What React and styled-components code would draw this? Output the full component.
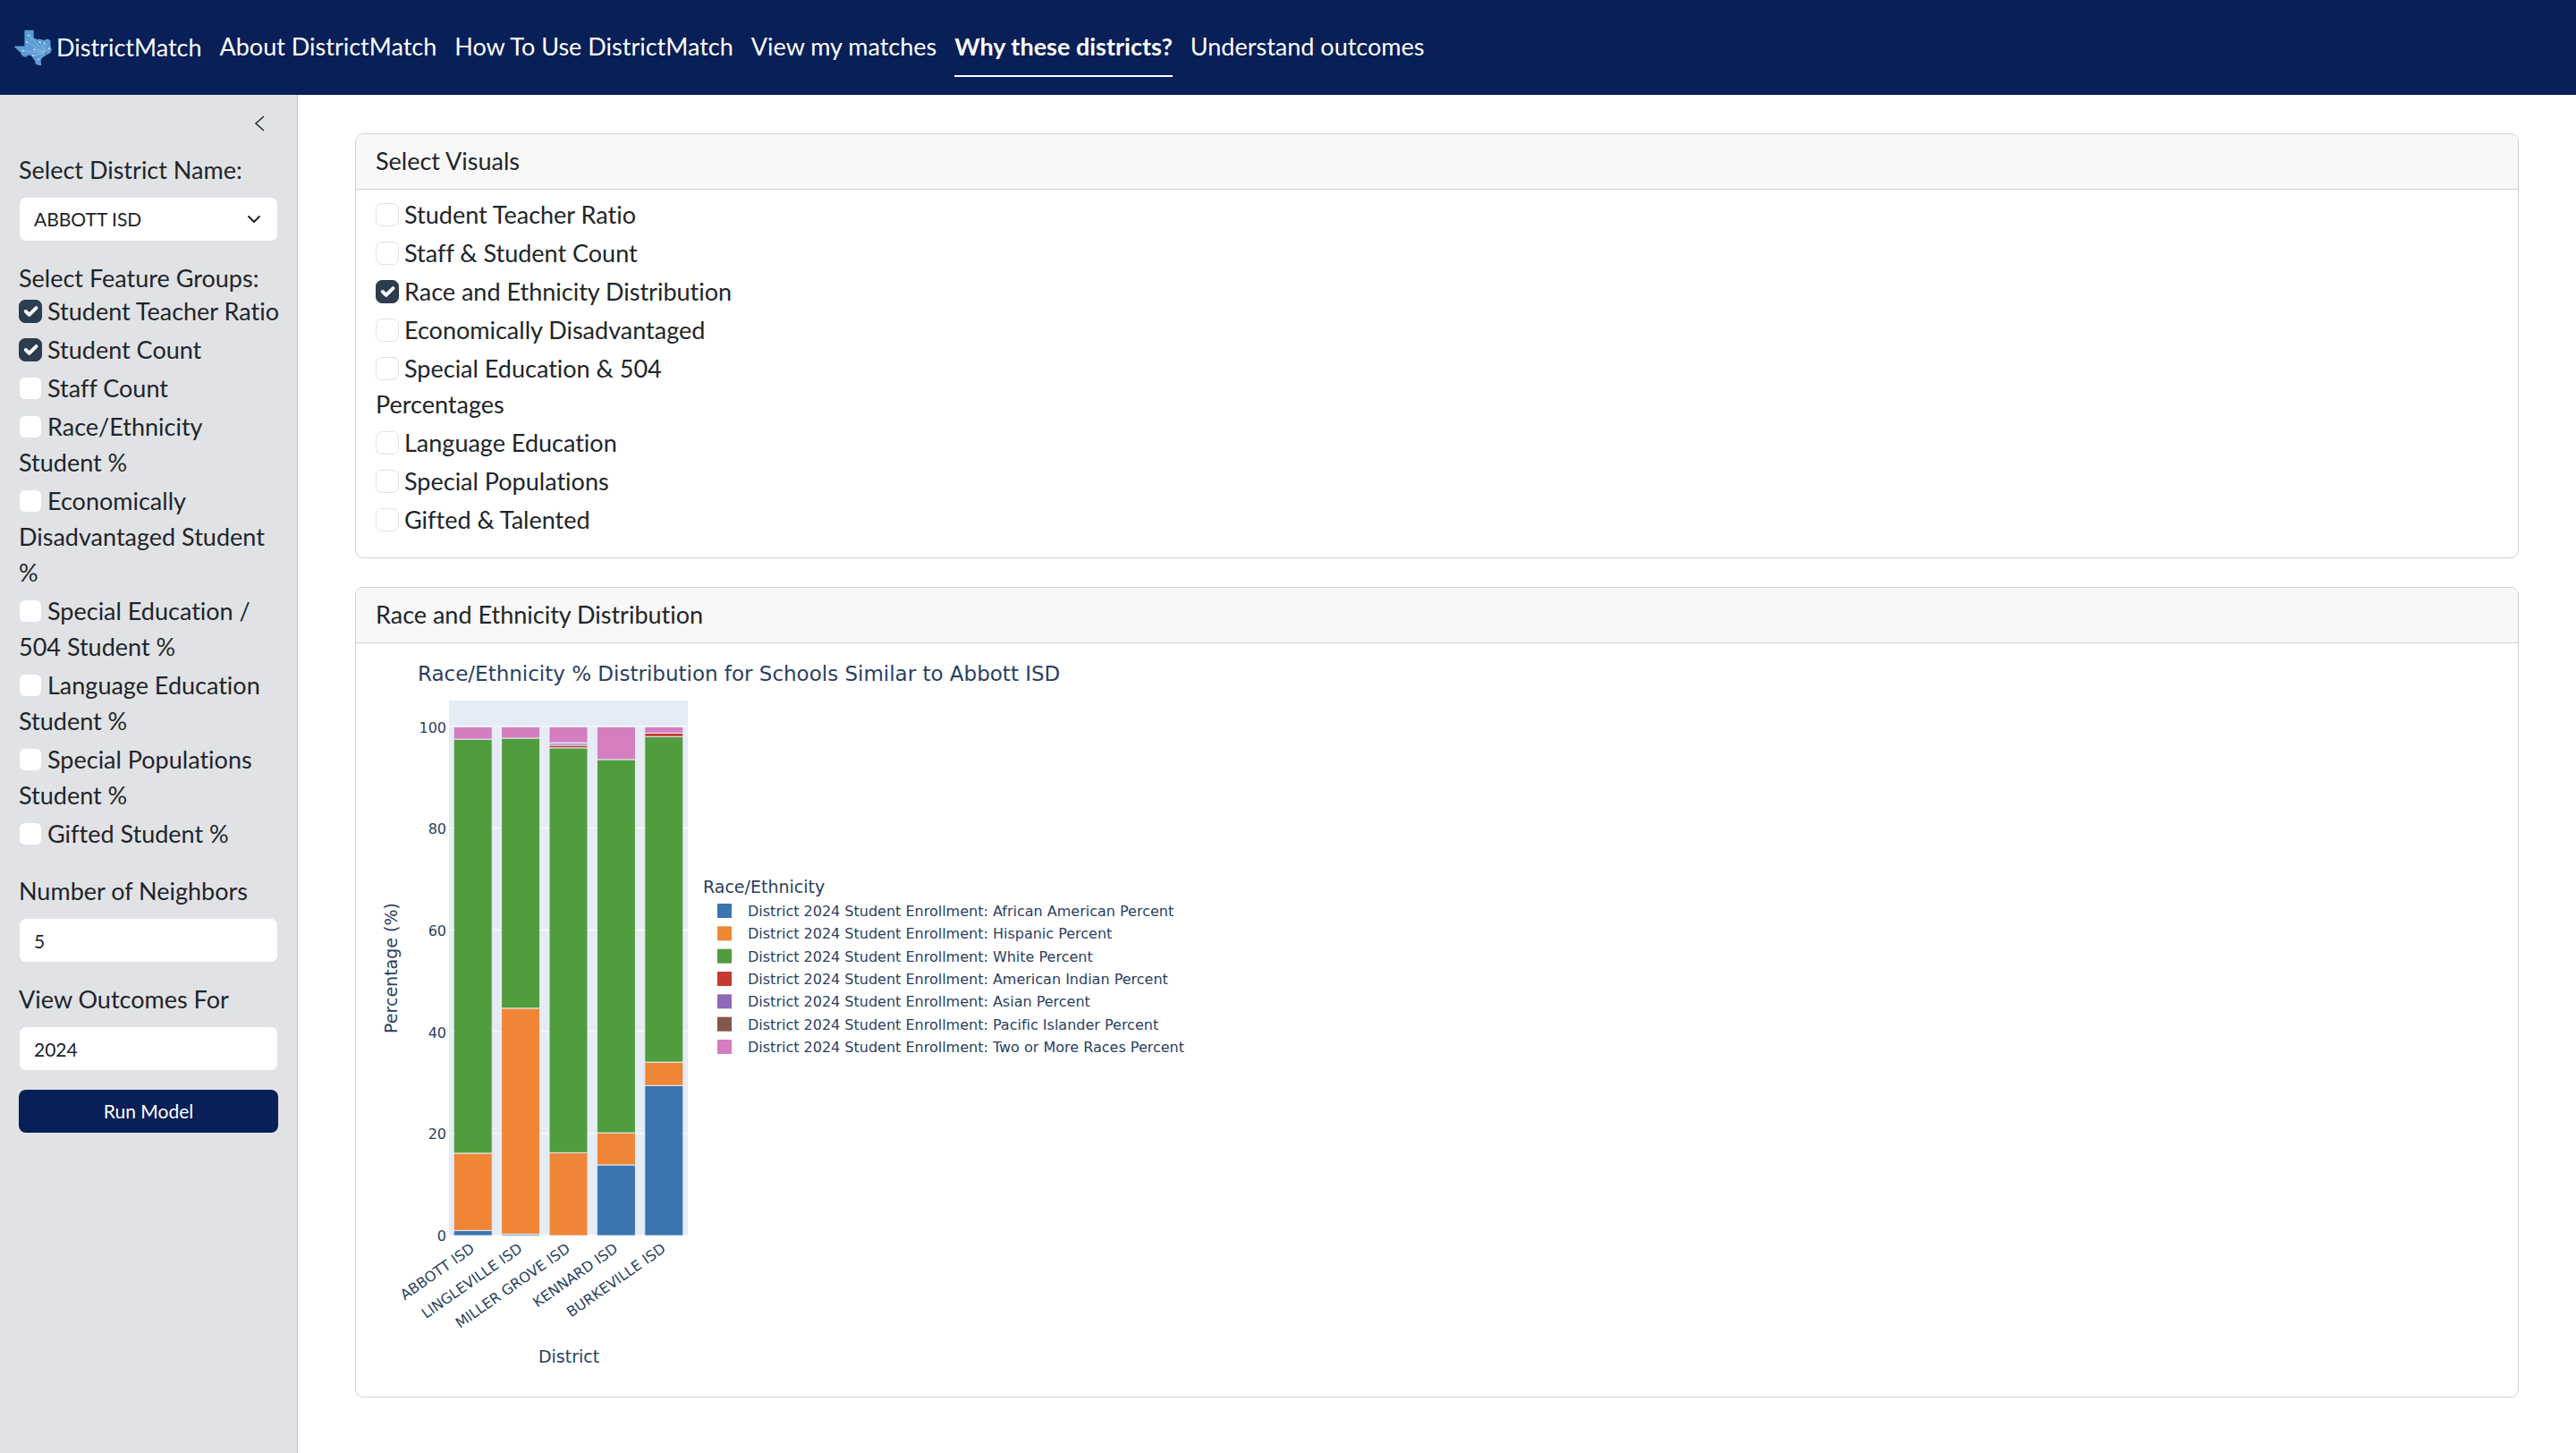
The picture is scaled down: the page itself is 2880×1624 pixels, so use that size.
import React, { useState } from "react";
import styled, { createGlobalStyle } from "styled-components";

const NAVY = "#081f57";
const INK = "#212529";

const GlobalStyle = createGlobalStyle`
  *, *::before, *::after { box-sizing: border-box; }
  html, body { margin: 0; background: #ffffff; }
  body {
    color: ${INK};
    font: 27px/40px Lato, "Liberation Sans", sans-serif;
    font-variant-ligatures: none;
  }
`;

const Page = styled.div`
  display: flex;
  flex-direction: column;
  min-height: 100vh;
`;

const Navbar = styled.nav`
  display: flex;
  align-items: center;
  gap: 20px;
  height: 106px;
  padding: 0 16px;
  background: ${NAVY};
`;

const Brand = styled.a`
  display: flex;
  align-items: center;
  gap: 5px;
  color: #ffffff;
  text-decoration: none;
`;

const NavLink = styled.a`
  padding: 12px 0;
  border-bottom: 2px solid ${(p) => (p.$active ? "#ffffff" : "transparent")};
  color: #ffffff;
  font-weight: ${(p) => (p.$active ? 700 : 400)};
  text-decoration: none;
`;

const Body = styled.div`
  display: flex;
  flex: 1;
`;

const Sidebar = styled.aside`
  display: flex;
  flex-direction: column;
  flex: none;
  width: 333px;
  padding: 14px 21px;
  border-right: 1px solid #b9babf;
  background: #e1e2e6;
`;

const CollapseButton = styled.button`
  align-self: flex-end;
  display: flex;
  margin-bottom: 14px;
  padding: 8px 10px;
  border: 0;
  background: none;
  color: ${INK};
`;

const FieldLabel = styled.label`
  display: block;
  margin-bottom: 10px;
`;

const Field = styled.div`
  margin-bottom: 21px;
`;

const controlStyle = `
  display: block;
  width: 100%;
  height: 50px;
  padding: 0 16px;
  border: 1px solid #e1e2e6;
  border-radius: 8px;
  background-color: #ffffff;
  color: ${INK};
  font: 21px/32px Lato, "Liberation Sans", sans-serif;
  appearance: none;
`;

const TextInput = styled.input`
  ${controlStyle}
`;

const SelectWrap = styled.div`
  position: relative;
  svg {
    position: absolute;
    right: 19px;
    top: 17px;
    pointer-events: none;
  }
`;

const Select = styled.select`
  ${controlStyle}
`;

const RunButton = styled.button`
  height: 48px;
  border: 0;
  border-radius: 8px;
  background: ${NAVY};
  color: #ffffff;
  font: 21px/32px Lato, "Liberation Sans", sans-serif;
`;

const Group = styled.fieldset`
  min-width: 0;
  max-width: 400px;
  margin: 0 -4px 0 0;
  padding: 0;
  border: 0;
`;

const Legend = styled.legend`
  padding: 2px 0 0;
  line-height: 35px;
`;

const Option = styled.label`
  display: block;
  margin-bottom: 3px;
`;

const Checkbox = styled.input`
  appearance: none;
  width: 26px;
  height: 26px;
  margin: 7px 6px 0 0;
  vertical-align: top;
  border: 1px solid #dee2e6;
  border-radius: 7px;
  background: #ffffff center / 26px no-repeat;
  &:checked {
    border-color: #2d3c4f;
    background-color: #2d3c4f;
    background-image: url("data:image/svg+xml,%3csvg xmlns='http://www.w3.org/2000/svg' viewBox='0 0 20 20'%3e%3cpath fill='none' stroke='%23fff' stroke-linecap='round' stroke-linejoin='round' stroke-width='3' d='m6 10 3 3 6-6'/%3e%3c/svg%3e");
  }
`;

const Main = styled.main`
  display: flex;
  flex: 1;
  flex-direction: column;
  gap: 32px;
  min-width: 0;
  padding: 43px 64px;
`;

const Card = styled.section`
  border: 1px solid #cfd0d1;
  border-radius: 9px;
  background: #ffffff;
  overflow: hidden;
`;

const CardHeader = styled.h2`
  margin: 0;
  padding: 10px 22px 11px;
  border-bottom: 1px solid #cfd0d1;
  background: #f8f8f8;
  font-size: 27px;
  font-weight: 400;
  line-height: 40px;
`;

const CardBody = styled.div`
  padding: ${(p) => (p.$flush ? "0" : "8px 22px 19px")};
`;

const ChartSvg = styled.svg`
  display: block;
  font-family: "DejaVu Sans", sans-serif;
  fill: #2a3f5f;
`;

const FEATURES = [
  ["Student Teacher Ratio", true],
  ["Student Count", true],
  ["Staff Count", false],
  ["Race/Ethnicity Student %", false],
  ["Economically Disadvantaged Student %", false],
  ["Special Education / 504 Student %", false],
  ["Language Education Student %", false],
  ["Special Populations Student %", false],
  ["Gifted Student %", false],
];

const VISUALS = [
  ["Student Teacher Ratio", false],
  ["Staff & Student Count", false],
  ["Race and Ethnicity Distribution", true],
  ["Economically Disadvantaged", false],
  ["Special Education & 504 Percentages", false],
  ["Language Education", false],
  ["Special Populations", false],
  ["Gifted & Talented", false],
];

const SERIES = [
  ["African American", "#3a75af"],
  ["Hispanic", "#ef8636"],
  ["White", "#519d3e"],
  ["American Indian", "#c53a32"],
  ["Asian", "#8d69b8"],
  ["Pacific Islander", "#84584e"],
  ["Two or More Races", "#d57dbe"],
];

const DISTRICTS = [
  ["ABBOTT ISD", [1.0, 15.2, 81.4, 0, 0, 0, 2.4]],
  ["LINGLEVILLE ISD", [0.3, 44.4, 53.1, 0, 0, 0, 2.2]],
  ["MILLER GROVE ISD", [0, 16.3, 79.6, 0.5, 0.4, 0.1, 3.1]],
  ["KENNARD ISD", [13.9, 6.3, 73.4, 0, 0, 0, 6.4]],
  ["BURKEVILLE ISD", [29.5, 4.6, 64.0, 0.7, 0, 0, 1.2]],
];

function CheckList({ name, items }) {
  return items.map(([text, on]) => (
    <Option key={text}>
      <Checkbox type="checkbox" name={name} defaultChecked={on} />
      {text}
    </Option>
  ));
}

function TexasLogo() {
  const hub = [117, 98];
  const ends = [[60, 38], [54, 60], [41, 90], [80, 86], [98, 60], [113, 65], [129, 82], [75, 106], [93, 119]];
  return (
    <svg width="42" height="41" viewBox="12 18 126 124" aria-hidden="true">
      <path
        fill="#5b9bd5"
        d="M46 20H77V46L88 51L98 50L110 54L125 50L134 56V72L138 86L134 97L120 104L106 113L101 122L103 139L97 140L84 135L80 122L69 107L58 105L50 112L38 107L31 94L12 77V74H46Z"
      />
      {ends.map(([x, y]) => (
        <g key={`${x}-${y}`}>
          <path d={`M${x} ${y}L${hub[0]} ${hub[1]}`} stroke="#9cc3e8" strokeWidth="2" />
          <circle cx={x} cy={y} r="3" fill="#cfe2f5" />
        </g>
      ))}
      <circle cx={hub[0]} cy={hub[1]} r="3" fill="#3c5f94" />
    </svg>
  );
}

function Chart() {
  const left = 104;
  const top = 64;
  const width = 267;
  const zero = 662;
  const unit = 5.685;
  const slot = width / DISTRICTS.length;
  const yOf = (v) => zero - v * unit;
  return (
    <ChartSvg width="1000" height="842" role="img" aria-label="Race and ethnicity distribution chart">
      <text x="69" y="42" fontSize="23">Race/Ethnicity % Distribution for Schools Similar to Abbott ISD</text>
      <rect x={left} y={top} width={width} height={zero - top} fill="#e5ecf6" />
      {[0, 20, 40, 60, 80, 100].map((v) => (
        <g key={v}>
          <rect x={left} y={yOf(v) - 1} width={width} height="1" fill="#ffffff" />
          <text x="101" y={yOf(v) + 6} fontSize="16" textAnchor="end">{v}</text>
        </g>
      ))}
      {DISTRICTS.map(([name, values], i) => {
        let sum = 0;
        const cx = left + slot * (i + 0.5);
        return (
          <g key={name}>
            {values.map((v, s) => {
              const y = yOf(sum + v);
              sum += v;
              return v > 0 ? (
                <rect key={s} x={cx - 21.5} y={y} width="43" height={v * unit} fill={SERIES[s][1]} stroke="#e5ecf6" strokeWidth="1" />
              ) : null;
            })}
            <text fontSize="16" textAnchor="end" transform={`translate(${cx + 3} ${zero + 17}) rotate(-35)`}>{name}</text>
          </g>
        );
      })}
      <text fontSize="19" textAnchor="middle" transform="translate(46 363) rotate(-90)">Percentage (%)</text>
      <text x="238" y="804" fontSize="19" textAnchor="middle">District</text>
      <text x="388" y="279" fontSize="19">Race/Ethnicity</text>
      {SERIES.map(([name, color], i) => (
        <g key={name}>
          <rect x="404" y={291 + (i * 76) / 3} width="16" height="16" fill={color} />
          <text x="438" y={305 + (i * 76) / 3} fontSize="16">{`District 2024 Student Enrollment: ${name} Percent`}</text>
        </g>
      ))}
    </ChartSvg>
  );
}

export default function App() {
  const [year, setYear] = useState("2024");
  const [neighbors, setNeighbors] = useState("5");
  return (
    <Page>
      <GlobalStyle />
      <Navbar>
        <Brand href="#home"><TexasLogo />DistrictMatch</Brand>
        <NavLink href="#about">About DistrictMatch</NavLink>
        <NavLink href="#how-to">How To Use DistrictMatch</NavLink>
        <NavLink href="#matches">View my matches</NavLink>
        <NavLink href="#why" $active aria-current="page">Why these districts?</NavLink>
        <NavLink href="#outcomes">Understand outcomes</NavLink>
      </Navbar>
      <Body>
        <Sidebar>
          <CollapseButton aria-label="Collapse sidebar">
            <svg width="20" height="20" viewBox="0 0 20 20" fill="none" stroke="currentColor" strokeWidth="1.5" aria-hidden="true">
              <path d="M14 2L5 10L14 18" />
            </svg>
          </CollapseButton>
          <Field>
            <FieldLabel htmlFor="district">Select District Name:</FieldLabel>
            <SelectWrap>
              <Select id="district" defaultValue="ABBOTT ISD">
                {DISTRICTS.map(([name]) => <option key={name}>{name}</option>)}
              </Select>
              <svg width="16" height="16" viewBox="0 0 16 16" fill="none" stroke={INK} strokeWidth="2" strokeLinecap="round" strokeLinejoin="round" aria-hidden="true">
                <path d="m2 5 6 6 6-6" />
              </svg>
            </SelectWrap>
          </Field>
          <Field>
            <Group>
              <Legend>Select Feature Groups:</Legend>
              <CheckList name="features" items={FEATURES} />
            </Group>
          </Field>
          <Field>
            <FieldLabel htmlFor="neighbors">Number of Neighbors</FieldLabel>
            <TextInput id="neighbors" value={neighbors} onChange={(e) => setNeighbors(e.target.value)} />
          </Field>
          <Field>
            <FieldLabel htmlFor="year">View Outcomes For</FieldLabel>
            <TextInput id="year" value={year} onChange={(e) => setYear(e.target.value)} />
          </Field>
          <RunButton>Run Model</RunButton>
        </Sidebar>
        <Main>
          <Card>
            <CardHeader>Select Visuals</CardHeader>
            <CardBody>
              <Group aria-label="Select Visuals">
                <CheckList name="visuals" items={VISUALS} />
              </Group>
            </CardBody>
          </Card>
          <Card>
            <CardHeader>Race and Ethnicity Distribution</CardHeader>
            <CardBody $flush>
              <Chart />
            </CardBody>
          </Card>
        </Main>
      </Body>
    </Page>
  );
}
